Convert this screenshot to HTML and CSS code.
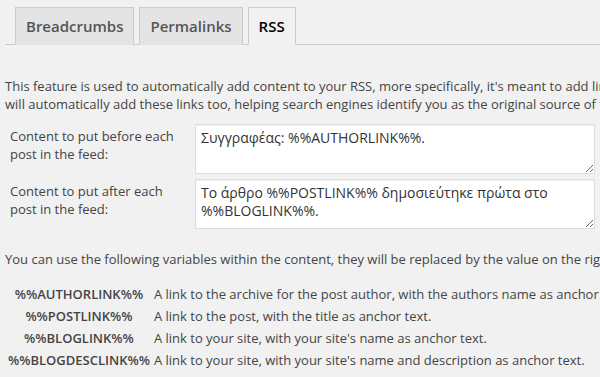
FILE: index.html
```html
<!DOCTYPE html>
<html lang="en">
<head>
  <meta charset="UTF-8">
  <meta name="viewport" content="width=device-width, initial-scale=1.0">
  <link rel="stylesheet" href="styles.css">
  <title>RSS settings</title>
</head>
<body>

<div class="wrap">
  <div class="nav-tab-wrapper">
    <a class="nav-tab" href="#breadcrumbs">Breadcrumbs</a>
    <a class="nav-tab" href="#permalinks">Permalinks</a>
    <a class="nav-tab nav-tab-active" href="#rss">RSS</a>
  </div>

  <p class="intro">This feature is used to automatically add content to your RSS, more specifically, it's meant to add links back to your blog and your blog posts, so dumb scrapers<br>will automatically add these links too, helping search engines identify you as the original source of the content.</p>

  <div class="form-table">
    <label for="rssbefore">Content to put before each post in the feed:</label>
    <textarea id="rssbefore">Συγγραφέας: %%AUTHORLINK%%.</textarea>
    <label for="rssafter">Content to put after each post in the feed:</label>
    <textarea id="rssafter">Το άρθρο %%POSTLINK%% δημοσιεύτηκε πρώτα στο %%BLOGLINK%%.</textarea>
  </div>

  <p class="vars-intro">You can use the following variables within the content, they will be replaced by the value on the right.</p>

  <table class="vars">
    <tr>
      <th>%%AUTHORLINK%%</th>
      <td>A link to the archive for the post author, with the authors name as anchor text.</td>
    </tr>
    <tr>
      <th>%%POSTLINK%%</th>
      <td>A link to the post, with the title as anchor text.</td>
    </tr>
    <tr>
      <th>%%BLOGLINK%%</th>
      <td>A link to your site, with your site's name as anchor text.</td>
    </tr>
    <tr>
      <th>%%BLOGDESCLINK%%</th>
      <td>A link to your site, with your site's name and description as anchor text.</td>
    </tr>
  </table>
</div>

</body>
</html>
```

FILE: styles.css
```css
body {
  font-family: "Open Sans", sans-serif;
  font-size: 13px;
  line-height: 18px;
  color: #444;
  background-color: #f1f1f1;
  margin: 0;
  overflow: hidden;
}

.wrap {
  width: 1000px;
  padding-left: 5px;
}

.nav-tab-wrapper {
  display: flex;
  gap: 5px;
  margin-top: 7px;
  padding-left: 10px;
  border-bottom: 1px solid #ccc;
}

.nav-tab {
  display: block;
  padding: 6px 10px;
  margin-bottom: -1px;
  font-size: 15px;
  line-height: 24px;
  font-weight: 600;
  color: #555;
  text-decoration: none;
  background-color: #e4e4e4;
  border: 1px solid #ccc;
  border-bottom: none;
}

.nav-tab-active {
  color: #000;
  background-color: #f1f1f1;
  border-bottom: 1px solid #f1f1f1;
}

.intro {
  margin: 32px 0 0;
  white-space: nowrap;
}

.form-table {
  display: grid;
  grid-template-columns: 185px 400px;
  gap: 5px 0;
  margin-top: 11px;
  padding-left: 5px;
}

.form-table label {
  font-size: 13px;
  line-height: 18px;
  padding: 3px 12px 0 0;
}

.form-table textarea {
  height: 50px;
  box-sizing: border-box;
  padding: 4px 5px;
  font-family: "Open Sans", sans-serif;
  font-size: 14px;
  line-height: 18px;
  color: #333;
  background-color: #fff;
  border: 1px solid #ddd;
  box-shadow: inset 0 1px 2px rgba(0, 0, 0, 0.07);
  outline: none;
}

.vars-intro {
  margin: 21px 0 0;
  white-space: nowrap;
}

.vars {
  margin-top: 14px;
  border-spacing: 2px;
  white-space: nowrap;
}

.vars th,
.vars td {
  padding: 1px;
}

.vars th {
  font-weight: 600;
}
```
